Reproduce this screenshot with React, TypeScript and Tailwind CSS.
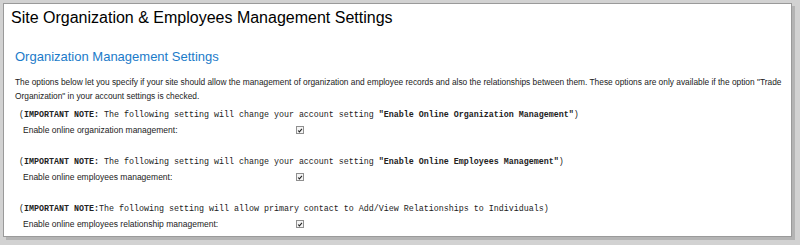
import React from "react";

const notes = [
  {
    pre: " The following setting will change your account setting ",
    quoted: "\"Enable Online Organization Management\"",
    post: ")",
    label: "Enable online organization management:",
  },
  {
    pre: " The following setting will change your account setting ",
    quoted: "\"Enable Online Employees Management\"",
    post: ")",
    label: "Enable online employees management:",
  },
  {
    pre: "The following setting will allow primary contact to Add/View Relationships to Individuals)",
    quoted: "",
    post: "",
    label: "Enable online employees relationship management:",
  },
];

const CheckMark = () => (
  <span className="flex h-[8px] w-[8px] items-center justify-center border border-[#8f8f8f] bg-[#f4f4f4]">
    <svg viewBox="0 0 8 8" className="h-[7px] w-[7px]">
      <path d="M1.5 4 L3.2 5.8 L6.6 1.8" stroke="#222" strokeWidth="1.4" fill="none" />
    </svg>
  </span>
);

export default function App() {
  return (
    <div className="h-[245px] w-[800px] bg-[#d2d2d2] pl-[3px] pt-[3px] pr-[8px] pb-[8px] font-['Liberation_Sans',Arial,sans-serif]">
      <div className="h-full w-full border border-[#9a9a9a] bg-white shadow-[3px_3px_0_#b4b4b4]">
        <h1 className="pl-[7px] pt-[4px] text-[16px] leading-[20px] text-black">
          Site Organization &amp; Employees Management Settings
        </h1>
        <h2 className="mt-[21px] pl-[11px] text-[13px] leading-[16px] text-[#1b7bc9]">
          Organization Management Settings
        </h2>
        <p className="mt-[10px] pl-[11px] pr-[6px] text-[8.35px] leading-[14px] text-[#222]">
          The options below let you specify if your site should allow the management of organization and employee records and also the relationships between them. These options are only available if the option "Trade Organization" in your account settings is checked.
        </p>
        <div className="mt-[5px] flex flex-col gap-[17px] pl-[15px]">
          {notes.map((n) => (
            <div key={n.label} className="flex flex-col">
              <div className="font-['Liberation_Mono','Courier_New',monospace] text-[8.33px] leading-[14px] text-[#222] whitespace-pre">
                (<b>IMPORTANT NOTE:</b>
                {n.pre}
                {n.quoted && <b>{n.quoted}</b>}
                {n.post}
              </div>
              <div className="flex h-[16px] items-center pl-[4px] text-[8.5px] text-[#222]">
                <span className="w-[273px]">{n.label}</span>
                <CheckMark />
              </div>
            </div>
          ))}
        </div>
      </div>
    </div>
  );
}
